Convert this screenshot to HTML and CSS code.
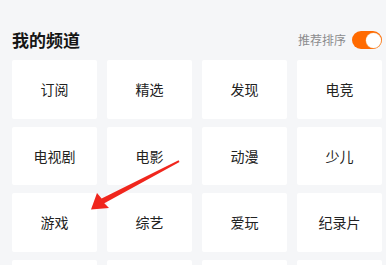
FILE: index.html
```html
<!DOCTYPE html>
<html lang="zh">
<head>
<meta charset="utf-8">
<link rel="stylesheet" href="styles.css">
</head>
<body>
<div class="page">
  <div class="header">
    <div class="title">我的频道</div>
    <div class="sort">
      <span class="sort-label">推荐排序</span>
      <span class="toggle"><span class="knob"></span></span>
    </div>
  </div>
  <div class="grid">
    <div class="tile">订阅</div>
    <div class="tile">精选</div>
    <div class="tile">发现</div>
    <div class="tile">电竞</div>
    <div class="tile">电视剧</div>
    <div class="tile">电影</div>
    <div class="tile">动漫</div>
    <div class="tile">少儿</div>
    <div class="tile">游戏</div>
    <div class="tile">综艺</div>
    <div class="tile">爱玩</div>
    <div class="tile">纪录片</div>
    <div class="tile"></div>
    <div class="tile"></div>
    <div class="tile"></div>
    <div class="tile"></div>
  </div>
  <svg class="arrow" width="386" height="265" viewBox="0 0 386 265">
    <polygon points="178.6,160.2 101.6,198.6 97,193 91,209.5 109,208 104.3,203.3 179.5,161.9" fill="#f0261d"/>
  </svg>
</div>
</body>
</html>
```
FILE: styles.css
```css
html, body {
  margin: 0;
  padding: 0;
  background: #f5f6f8;
}
body {
  font-family: "Noto Sans CJK SC", "Noto Sans", sans-serif;
  width: 386px;
  height: 265px;
  overflow: hidden;
}
.page {
  position: relative;
  width: 386px;
  height: 265px;
}
.header {
  display: flex;
  align-items: center;
  justify-content: space-between;
  height: 40px;
  padding: 20px 4px 0 12px;
}
.title {
  font-size: 17px;
  font-weight: 700;
  color: #161616;
  line-height: 20px;
}
.sort {
  display: flex;
  align-items: center;
  gap: 6px;
}
.sort-label {
  font-size: 12px;
  color: #8c8c8e;
  line-height: 16px;
}
.toggle {
  display: flex;
  align-items: center;
  justify-content: flex-end;
  width: 30px;
  height: 18px;
  border-radius: 9px;
  background: #ff6a00;
  box-sizing: border-box;
  padding: 1.5px;
}
.knob {
  width: 15px;
  height: 15px;
  border-radius: 50%;
  background: #ffffff;
  box-shadow: 0 0 0 0.5px #f5a25a;
}
.grid {
  display: grid;
  grid-template-columns: repeat(4, 85px);
  grid-auto-rows: 58.5px;
  column-gap: 10px;
  row-gap: 8px;
  padding: 0 4px 0 12px;
}
.tile {
  background: #ffffff;
  border-radius: 2px;
  display: flex;
  align-items: center;
  justify-content: center;
  font-size: 14px;
  color: #222222;
}
.arrow {
  position: absolute;
  left: 0;
  top: 0;
  pointer-events: none;
}
```
